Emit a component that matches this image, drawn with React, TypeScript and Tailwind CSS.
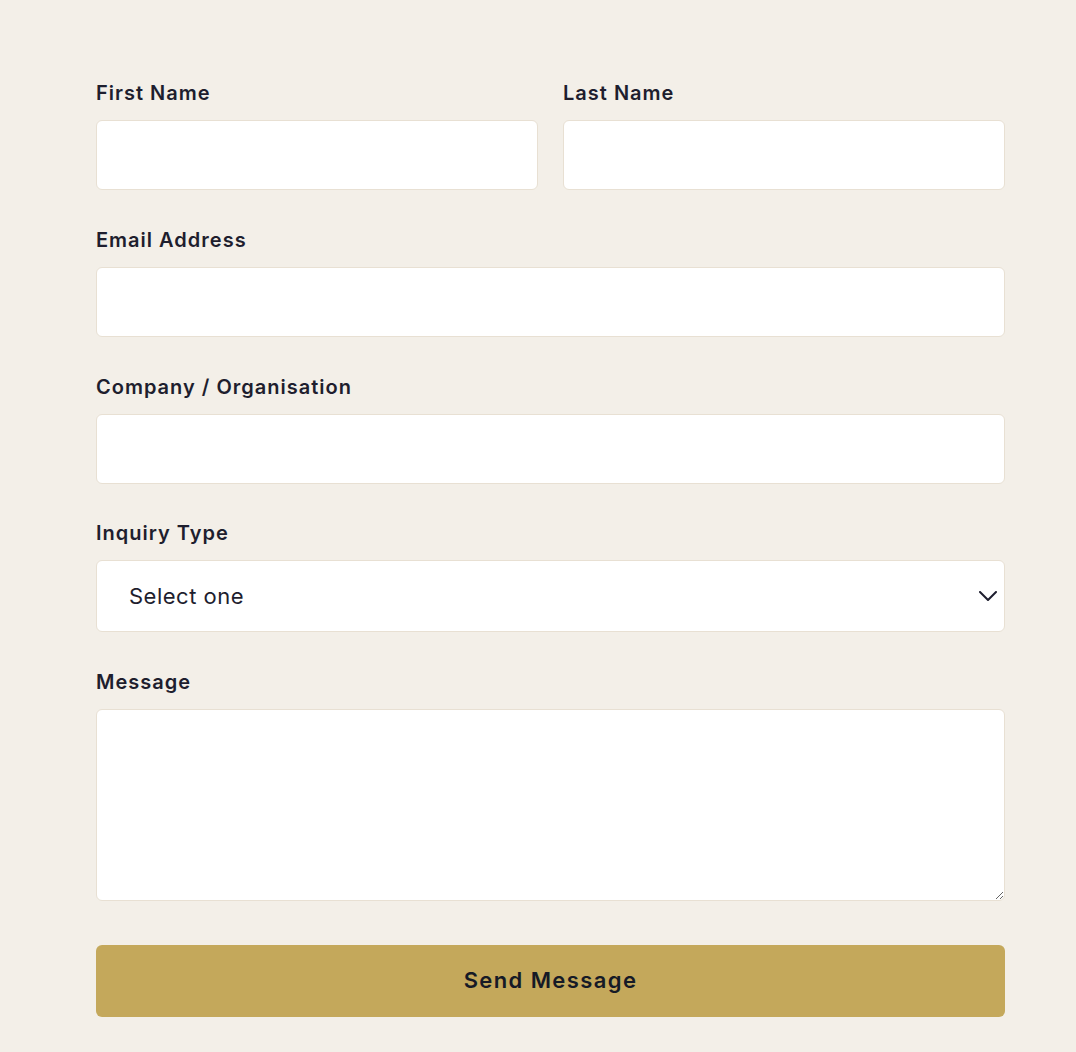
import React from "react";

const labelCls =
  "block text-[20px] leading-[28px] font-semibold tracking-[1px] text-[#1e1e2e] mb-[13px]";
const fieldCls =
  "block w-full h-[70px] rounded-[6px] border border-[#e8e0d3] bg-white px-4 text-[20px] text-[#1e1e2e] outline-none";

function Field({ label, id }: { label: string; id: string }) {
  return (
    <div>
      <label htmlFor={id} className={labelCls}>
        {label}
      </label>
      <input id={id} type="text" className={fieldCls} />
    </div>
  );
}

export default function App() {
  return (
    <div
      className="min-h-[1052px] w-full bg-[#f3efe8]"
      style={{ fontFamily: "Inter, 'Noto Sans', sans-serif" }}
    >
      <form className="ml-[96px] w-[909px] pt-[79px] flex flex-col gap-[35.75px]">
        <div className="grid grid-cols-2 gap-[25px]">
          <Field label="First Name" id="first" />
          <Field label="Last Name" id="last" />
        </div>
        <Field label="Email Address" id="email" />
        <Field label="Company / Organisation" id="company" />
        <div>
          <label htmlFor="type" className={labelCls}>
            Inquiry Type
          </label>
          <div className="relative">
            <select
              id="type"
              defaultValue=""
              className="block w-full h-[72px] appearance-none rounded-[6px] border border-[#e8e0d3] bg-white pl-[32px] pr-12 text-[22px] tracking-[0.5px] text-[#1e1e2e] outline-none"
            >
              <option value="">Select one</option>
              <option value="general">General</option>
              <option value="partnership">Partnership</option>
              <option value="support">Support</option>
            </select>
            <svg
              className="pointer-events-none absolute right-[8px] top-1/2 -translate-y-1/2"
              width="18"
              height="10"
              viewBox="0 0 18 10"
              fill="none"
            >
              <path
                d="M1 1l8 8 8-8"
                stroke="#1e1e2e"
                strokeWidth="2"
                strokeLinecap="round"
                strokeLinejoin="round"
              />
            </svg>
          </div>
        </div>
        <div>
          <label htmlFor="msg" className={labelCls}>
            Message
          </label>
          <textarea
            id="msg"
            className="block w-full h-[192px] rounded-[6px] border border-[#e8e0d3] bg-white px-4 py-3 text-[20px] text-[#1e1e2e] outline-none"
          />
        </div>
        <button
          type="button"
          className="mt-[8px] h-[72px] w-full rounded-[6px] bg-[#c4a85b] text-[22px] font-semibold tracking-[1.4px] text-[#161a26]"
        >
          Send Message
        </button>
      </form>
    </div>
  );
}
